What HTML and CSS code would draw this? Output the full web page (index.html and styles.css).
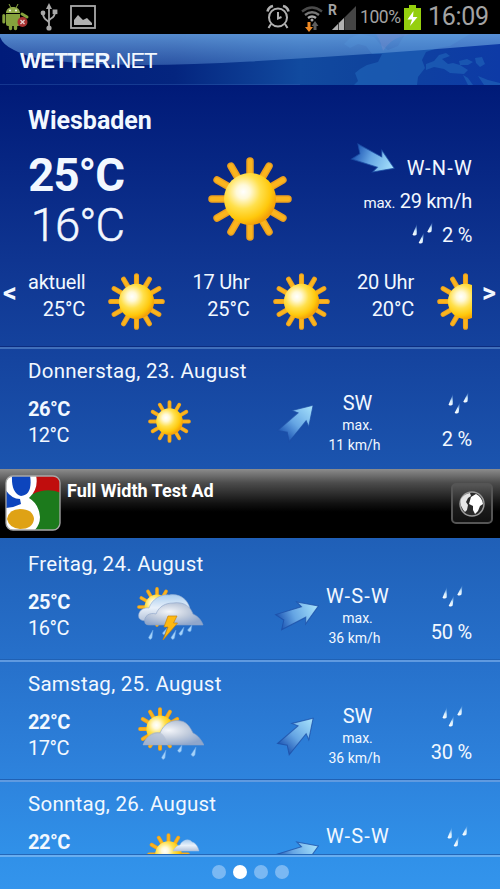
FILE: index.html
```html
<!DOCTYPE html>
<html lang="de">
<head>
  <meta charset="UTF-8" />
  <meta name="viewport" content="width=device-width, initial-scale=1" />
  <title>WETTER.NET</title>
  <link rel="stylesheet" href="styles.css">
</head>
<body>
  <!-- shared icons -->
  <svg class="defs" width="0" height="0">
    <defs>
      <radialGradient id="sunFill" cx="0.37" cy="0.36" r="0.66">
        <stop offset="0" stop-color="#ffffff" />
        <stop offset="0.2" stop-color="#fff9d8" />
        <stop offset="0.5" stop-color="#ffe04c" />
        <stop offset="0.8" stop-color="#ffc80c" />
        <stop offset="1" stop-color="#f3a008" />
      </radialGradient>
      <linearGradient id="arrowFill" x1="0" y1="0" x2="1" y2="0">
        <stop offset="0" stop-color="#1d56b4" />
        <stop offset="0.4" stop-color="#66a6e4" />
        <stop offset="1" stop-color="#a9e4fd" />
      </linearGradient>
      <linearGradient id="dropFill" x1="0.7" y1="0" x2="0.3" y2="1">
        <stop offset="0" stop-color="#7fb8f0" stop-opacity="0.2" />
        <stop offset="0.5" stop-color="#cfe9fb" />
        <stop offset="1" stop-color="#ffffff" />
      </linearGradient>
      <radialGradient id="cloudFill" cx="0.42" cy="0.4" r="0.65">
        <stop offset="0" stop-color="#f4f6fa" />
        <stop offset="0.5" stop-color="#c3cddd" />
        <stop offset="1" stop-color="#8fa6cb" />
      </radialGradient>
      <linearGradient id="cloudBack" x1="0" y1="0" x2="0" y2="1">
        <stop offset="0" stop-color="#a9cdf0" />
        <stop offset="0.5" stop-color="#e9f1fa" />
        <stop offset="1" stop-color="#b4c3da" />
      </linearGradient>
      <linearGradient id="glass" x1="0" y1="0" x2="0" y2="1">
        <stop offset="0" stop-color="#6aa5e2" stop-opacity="0.8" />
        <stop offset="1" stop-color="#5c8fd2" stop-opacity="0.45" />
      </linearGradient>
      <linearGradient id="headFill" x1="0" y1="0" x2="1" y2="0">
        <stop offset="0" stop-color="#001b7a" />
        <stop offset="0.35" stop-color="#04257f" />
        <stop offset="0.6" stop-color="#114a9f" />
        <stop offset="0.72" stop-color="#0f449d" />
        <stop offset="1" stop-color="#0d3aa6" />
      </linearGradient>
      <clipPath id="adClip"><rect x="1" y="1" width="54" height="54" rx="7" /></clipPath>
    </defs>

    <symbol id="sun" viewBox="-42 -42 84 84">
      <g class="rays">
        <path d="M0-38V-24M19-32.900L12-20.800M32.900-19L20.800-12M38 0H24M32.900 19L20.800 12M19 32.900L12 20.800M0 38V24M-19 32.900L-12 20.800M-32.900 19L-20.800 12M-38 0H-24M-32.900-19L-20.800-12M-19-32.900L-12-20.800" />
      </g>
      <g class="rays rays-inner">
        <path d="M0-38V-24M19-32.900L12-20.800M32.900-19L20.800-12M38 0H24M32.900 19L20.800 12M19 32.900L12 20.800M0 38V24M-19 32.900L-12 20.800M-32.900 19L-20.800 12M-38 0H-24M-32.900-19L-20.800-12M-19-32.900L-12-20.800" />
      </g>
      <circle r="26" fill="url(#sunFill)" />
    </symbol>

    <symbol id="arrow" viewBox="-25 -25 50 50">
      <path d="M22 0L4-11.500L6.500-5.500L-20-8L-14.500 0L-20 8L6.500 5.500L4 11.500Z" fill="url(#arrowFill)" stroke="#1c4ea6" stroke-width="1" stroke-opacity="0.75" />
    </symbol>

    <symbol id="drops" viewBox="0 0 24 26">
      <g fill="url(#dropFill)">
        <path d="M6 2L5.700 12.500Q4 14.500 1.500 12.700Z" />
        <path d="M21.500 0L20.500 9.500Q18.500 11.500 16.300 9.700Z" />
        <path d="M13 10.500L11.700 20.500Q9.800 22.500 7.700 20.700Z" />
      </g>
    </symbol>

    <symbol id="storm" viewBox="0 0 68 54">
      <use href="#sun" x="1" y="0" width="40" height="40" />
      <path d="M3 31C1 24 8 20 13 21C16 12 25 7 33 8C43 6 52 12 54 22L56 32L12 34C7 34 4 33 3 31Z" fill="url(#cloudBack)" stroke="#94acd0" stroke-width="0.600" />
      <path d="M9 36C7 29 14 25 20 27C23 19 30 16 37 16C49 14 55 21 57 27C62 29 66 34 67 38H14C11 38 9 37 9 36Z" fill="url(#cloudFill)" stroke="#8ba3c8" stroke-width="0.600" />
      <g fill="#a5d3fa" stroke="#5f9ee4" stroke-width="0.500">
        <path d="M17 43L16 51Q14 54 12.500 50.500Z" />
        <path d="M31 41L29 47Q27 49 26.500 46Z" />
        <path d="M40 43L38.500 51Q36.500 54 35 50.500Z" />
        <path d="M48 40L46.500 47Q44.500 50 43 46.500Z" />
        <path d="M56 38L55 44Q53 46 51.500 43Z" />
      </g>
      <path d="M32 29H41L37.500 36H41.500L27 53L32 40H28Z" fill="#fdb813" stroke="#c98408" stroke-width="0.700" />
    </symbol>

    <symbol id="shower" viewBox="0 0 68 54">
      <use href="#sun" x="2" y="0" width="44" height="44" />
      <path d="M7 38C9 31 16 25 24 26C28 16 37 12 45 14C51 15 54 20 57 26C62 28 66 34 68 38Z" fill="url(#cloudFill)" stroke="#8ba3c8" stroke-width="0.600" />
      <path d="M7 38C9 31 15 25 21 25C27 25 30 31 32 38Z" fill="#aebbd0" opacity="0.6" />
      <g fill="#a5d3fa" stroke="#5f9ee4" stroke-width="0.500">
        <path d="M30 43L29 51Q27 54 25.500 50.500Z" />
        <path d="M46 38L45.500 44Q43 47 41.500 43.500Z" />
        <path d="M60 40L59 48Q57 51 55 47.500Z" />
      </g>
    </symbol>

    <symbol id="fair" viewBox="0 0 54 44">
      <use href="#sun" x="0" y="0" width="43" height="43" />
      <path d="M26 18C28 14 31 12 33 12C35 7 42 5 45 9C49 10 51 14 52 18Z" fill="url(#cloudBack)" stroke="#a9c0e0" stroke-width="0.500" />
    </symbol>
  </svg>

  <div class="phone">
    <div class="statusbar">
      <svg class="st-droid" width="30" height="30" viewBox="0 0 30 30">
        <path d="M9 2L11 6M18 2L16 6" stroke="#8ea842" stroke-width="1" />
        <path d="M6 11C6 3 20 3 20 11Z" fill="#93ad4a" />
        <circle cx="10" cy="8.500" r="0.900" fill="#fff" /><circle cx="16" cy="8.500" r="0.900" fill="#fff" />
        <path d="M6 12H20V22Q20 24 18 24H8Q6 24 6 22Z" fill="#86a23d" />
        <path d="M10.500 22V26.500M15.500 22V26.500" stroke="#86a23d" stroke-width="3.400" stroke-linecap="round" />
        <path d="M3.800 13.500V20M22 12L27 15" stroke="#86a23d" stroke-width="3" stroke-linecap="round" />
        <circle cx="22.500" cy="20" r="5" fill="#a83232" />
        <path d="M20.500 18L24.500 22M24.500 18L20.500 22" stroke="#e8d0d0" stroke-width="1.300" />
      </svg>
      <svg class="st-usb" width="18" height="28" viewBox="0 0 18 28">
        <g fill="none" stroke="#a9a9a9" stroke-width="1.800">
          <path d="M9 25V4M9 20C9 17 3 18 3 10M9 18C9 15 15 16 15 9" />
        </g>
        <path d="M9 0L12 6H6Z" fill="#a9a9a9" />
        <circle cx="9" cy="25" r="2.600" fill="#a9a9a9" />
        <circle cx="3" cy="10" r="2.400" fill="#a9a9a9" />
        <rect x="12.600" y="6.500" width="4.800" height="4.600" fill="#a9a9a9" />
      </svg>
      <svg class="st-pic" width="26" height="24" viewBox="0 0 26 24">
        <rect x="1" y="1" width="24" height="22" fill="none" stroke="#a9a9a9" stroke-width="1.800" />
        <path d="M4 20V15L8 10L13 15L17 13L22 18V20Z" fill="#b0b0b0" />
      </svg>
      <div class="st-right">
        <svg width="24" height="26" viewBox="0 0 24 26">
          <g fill="none" stroke="#b0b0b0" stroke-width="2">
            <circle cx="12" cy="13.500" r="9" />
            <path d="M12 8V14.500L15.500 13M5 20L2.500 24M19 20L21.500 24" />
            <path d="M1.500 7.500Q2.500 3 7 2M22.500 7.500Q21.500 3 17 2" stroke-width="2.600" />
          </g>
        </svg>
        <svg class="st-wifi" width="22" height="26" viewBox="0 0 22 26">
          <g fill="none" stroke-width="2.400">
            <path d="M1 5.500Q11-2.500 21 5.500" stroke="#4a4a4a" />
            <path d="M4 9Q11 3.500 18 9" stroke="#777" />
            <path d="M7 12Q11 9 15 12" stroke="#aaa" />
          </g>
          <circle cx="11" cy="14" r="1.500" fill="#aaa" />
          <path d="M6.500 16H9.500V21H12L8 26L4 21H6.500Z" fill="#f08a24" />
          <path d="M12.500 24V20H10.500L14 15L17.500 20H15.500V24Z" fill="#5e5e5e" />
        </svg>
        <div class="st-signal">
          <span class="roam">R</span>
          <svg width="24" height="24" viewBox="0 0 24 24">
            <path d="M24 0V24H0Z" fill="#454545" />
            <path d="M12 12V24H0Z" fill="#b0b0b0" />
            <path d="M6.500 16V24M12.500 11V24" stroke="#222" stroke-width="0.800" />
          </svg>
        </div>
        <span class="percent">100%</span>
        <svg class="st-batt" width="17" height="25" viewBox="0 0 17 25">
          <path d="M5 0H12V3H17V25H0V3H5Z" fill="#95cf0e" />
          <path d="M9.500 6L3.500 14.500H8L6 21L13.500 12H9Z" fill="#fff" />
        </svg>
        <span class="clock">16:09</span>
      </div>
    </div>

    <div class="header">
      <svg class="header-bg" width="500" height="51" viewBox="0 0 500 51">
        <rect width="500" height="51" fill="url(#headFill)" />
        <!-- oceans -->
        <g fill="#2167bb" opacity="0.6">
          <path d="M344 10L350 14L358 10L366 12L372 20L382 20L378 28L367 31L360 35L355 39L358 47L354 51H417L418 43L425 34L422 26L426 18L438 14L450 12L470 0H405L398 12L388 16L380 10L374 3L360 0L350 4Z" />
          <path d="M426 30L434 27L439 21L446 19L450 22L442 25L448 30L453 29L460 31L468 36L464 40L450 39L444 35L434 33L426 36Z" />
          <path d="M459 27L467 25L473 28L468 31H460Z" />
          <path d="M475 24L482 23L485 30L480 33L476 29Z" />
          <path d="M463 41L468 44L473 51H468Z" />
          <path d="M478 42L488 46L500 49V51H484Z" />
        </g>
        <path d="M0 0H500V10Q380 20 250 27.500T50 26Q28 24 14 16Q3 11 0 3Z" fill="url(#glass)" />
        <path d="M383 17Q390 6 400 3L412 0H376L380 7Z" fill="#7f8fcf" opacity="0.35" />
        <path d="M0 50.500H300" stroke="#3160b2" stroke-opacity="0.400" />
      </svg>
      <div class="logo"><b>WETTER.</b><span>NET</span></div>
    </div>

    <div class="content">
      <div class="today">
        <div class="city">Wiesbaden</div>
        <div class="now">
          <div class="now-temp">
            <div class="max">25°C</div>
            <div class="min">16°C</div>
          </div>
          <svg class="now-sun"><use href="#sun" /></svg>
          <div class="now-info">
            <div class="line"><svg class="arrow wnw"><use href="#arrow" /></svg><span class="compass">W-N-W</span></div>
            <div class="line"><small>max.</small> 29 km/h</div>
            <div class="line"><svg class="drops"><use href="#drops" /></svg>2 %</div>
          </div>
        </div>
        <div class="hours-row">
          <span class="nav">&lt;</span>
          <div class="hours">
            <div class="hour"><p>aktuell<br>25°C</p><svg><use href="#sun" /></svg></div>
            <div class="hour"><p>17 Uhr<br>25°C</p><svg><use href="#sun" /></svg></div>
            <div class="hour"><p>20 Uhr<br>20°C</p><svg><use href="#sun" /></svg></div>
          </div>
          <span class="nav next">&gt;</span>
        </div>
      </div>

      <div class="day first">
        <h3>Donnerstag, 23. August</h3>
        <div class="day-body">
          <div class="temps"><b>26°C</b><span>12°C</span></div>
          <div class="icon"><svg class="i-sun"><use href="#sun" /></svg></div>
          <div class="dir"><svg class="arrow sw"><use href="#arrow" /></svg></div>
          <div class="wind"><span>SW</span><small>max.</small><small class="speed">11 km/h</small></div>
          <div class="rain"><svg class="drops"><use href="#drops" /></svg><span>2 %</span></div>
        </div>
      </div>

      <div class="ad">
        <svg class="ad-logo" width="56" height="56" viewBox="0 0 56 56">
          <g clip-path="url(#adClip)">
            <rect width="56" height="56" fill="#1c7a1c" />
            <path d="M28 0H56V18Q42 12 28 19Z" fill="#c00d0d" />
            <path d="M0 0H31Q34 14 24 23Q34 29 35 42Q35 50 29 56H0Z" fill="#fff" />
            <path d="M7 0H25Q28 20 16 21Q6 18 7 0Z" fill="#0d45bd" />
            <path d="M0 14Q6 24 15 24L16 29Q8 33 0 33Z" fill="#0d45bd" />
            <path d="M2 44Q4 34 15 34Q28 34 29 44Q28 54 15 54Q4 53 2 44Z" fill="#dfa215" />
          </g>
          <rect x="1" y="1" width="54" height="54" rx="7" fill="none" stroke="#a8a8a8" stroke-width="1.300" />
        </svg>
        <span class="ad-text">Full Width Test Ad</span>
        <div class="ad-btn">
          <svg width="28" height="28" viewBox="0 0 28 28">
            <circle cx="14" cy="14" r="12" fill="#2a2a2a" stroke="#9a9a9a" stroke-width="1.500" />
            <path d="M3 9Q6 4 12 3L13 6L10 8L8 12L10 15L9 20L7 22Q1 16 3 9Z" fill="#e6e6e6" />
            <path d="M13 7L18 4Q24 7 25 14L22 16L20 21L17 24L15 20L15 16L11 14Z" fill="#fff" />
          </svg>
        </div>
      </div>

      <div class="day after-ad">
        <h3>Freitag, 24. August</h3>
        <div class="day-body">
          <div class="temps"><b>25°C</b><span>16°C</span></div>
          <div class="icon"><svg class="i-cloud"><use href="#storm" /></svg></div>
          <div class="dir"><svg class="arrow wsw"><use href="#arrow" /></svg></div>
          <div class="wind"><span class="compass">W-S-W</span><small>max.</small><small class="speed">36 km/h</small></div>
          <div class="rain"><svg class="drops"><use href="#drops" /></svg><span>50 %</span></div>
        </div>
      </div>

      <div class="day">
        <h3>Samstag, 25. August</h3>
        <div class="day-body">
          <div class="temps"><b>22°C</b><span>17°C</span></div>
          <div class="icon"><svg class="i-cloud"><use href="#shower" /></svg></div>
          <div class="dir"><svg class="arrow sw"><use href="#arrow" /></svg></div>
          <div class="wind"><span>SW</span><small>max.</small><small class="speed">36 km/h</small></div>
          <div class="rain"><svg class="drops"><use href="#drops" /></svg><span>30 %</span></div>
        </div>
      </div>

      <div class="day last">
        <h3>Sonntag, 26. August</h3>
        <div class="day-body">
          <div class="temps"><b>22°C</b></div>
          <div class="icon"><svg class="i-fair"><use href="#fair" /></svg></div>
          <div class="dir"><svg class="arrow wsw"><use href="#arrow" /></svg></div>
          <div class="wind"><span class="compass">W-S-W</span></div>
          <div class="rain"><svg class="drops"><use href="#drops" /></svg></div>
        </div>
      </div>
    </div>

    <div class="pager">
      <i></i><i class="active"></i><i></i><i></i>
    </div>
  </div>
</body>
</html>
```
FILE: styles.css
```css
* {
  box-sizing: border-box;
}

body {
  margin: 0;
  background: #000;
  color: #f2f8ff;
  font-family: Roboto, "Liberation Sans", sans-serif;
  font-size: 20px;
  overflow: hidden;
}

svg {
  display: block;
  flex: none;
}

.defs {
  position: absolute;
}

.rays {
  fill: none;
  stroke: #eda01e;
  stroke-width: 7.500;
  stroke-linecap: round;
}

.rays-inner {
  stroke: #fab51e;
  stroke-width: 4.500;
}

.phone {
  width: 500px;
  height: 889px;
  display: flex;
  flex-direction: column;
  background: linear-gradient(#001a78 85px, #0f3591 260px, #1b54ae 465px, #2061b9 550px, #266fc9 650px, #2d81db 765px, #3090e8 850px, #3394ec 889px);
}

/* status bar */
.statusbar {
  height: 34px;
  flex: none;
  display: flex;
  align-items: center;
  background: #000;
  color: #a3a3a3;
}

.st-usb {
  margin-left: 10px;
}

.st-pic {
  margin-left: 12px;
}

.st-right {
  margin-left: auto;
  padding-right: 11px;
  display: flex;
  align-items: center;
}

.st-wifi {
  margin-left: 11px;
  margin-top: 3px;
}

.st-signal {
  position: relative;
  margin-left: 9px;
  margin-top: 2px;
}

.roam {
  position: absolute;
  left: -4px;
  top: -3px;
  font-size: 14px;
  line-height: 14px;
  font-weight: bold;
}

.percent {
  font-size: 17.500px;
  margin-left: 4px;
  width: 41px;
  letter-spacing: -0.400px;
}

.st-batt {
  margin-left: 3px;
}

.clock {
  font-size: 25px;
  line-height: 34px;
  margin-left: 7px;
  width: 61px;
  letter-spacing: -0.300px;
}

/* header */
.header {
  position: relative;
  height: 51px;
  flex: none;
}

.header-bg {
  position: absolute;
  left: 0;
  top: 0;
}

.logo {
  position: relative;
  padding: 14px 0 0 20px;
  font-family: "Liberation Sans", Arial, sans-serif;
  font-size: 22px;
  line-height: 26px;
  letter-spacing: -0.500px;
}

.logo span {
  letter-spacing: -1px;
}

/* today */
.content {
  flex: 1;
  min-height: 0;
  overflow: hidden;
}

.today {
  height: 262px;
  padding-top: 21px;
  border-bottom: 1px solid #0c2c80;
}

.city {
  padding-left: 28px;
  font-size: 25px;
  line-height: 30px;
  font-weight: bold;
}

.now {
  display: grid;
  grid-template-columns: 180px 84px 1fr;
  height: 100px;
  margin-top: 15px;
  padding: 0 28px;
}

.now-temp {
  width: 96px;
  font-size: 45.500px;
  line-height: 49.500px;
  letter-spacing: -1px;
  text-align: right;
}

.max {
  font-weight: bold;
}

.min {
  font-weight: 300;
  -webkit-text-stroke: 0.500px #f2f8ff;
}

.now-sun {
  width: 84px;
  height: 84px;
  margin-top: 6px;
}

.line {
  display: flex;
  align-items: center;
  justify-content: flex-end;
  height: 33.500px;
  letter-spacing: -0.300px;
  white-space: pre;
}

.line small {
  margin-top: 3px;
}

small {
  font-size: 15px;
}

.compass,
.line .compass {
  letter-spacing: 1.200px;
  margin-right: -1px;
}

.arrow {
  width: 51px;
  height: 51px;
}

.arrow.wnw {
  transform: rotate(23deg);
  margin: -16px 8px 0 0;
}

.arrow.wsw {
  transform: rotate(-22deg);
}

.arrow.sw {
  transform: rotate(-46deg);
}

.drops {
  width: 24px;
  height: 26px;
}

.line .drops {
  margin-right: 7px;
}

.hours-row {
  display: flex;
  height: 76px;
  margin-top: 18px;
}

.nav {
  width: 28px;
  padding-left: 3px;
  font-size: 27px;
  line-height: 49px;
  font-weight: bold;
}

.nav.next {
  padding-left: 10px;
}

.hours {
  width: 444px;
  display: flex;
  overflow: hidden;
}

.hour {
  display: flex;
  flex: none;
  width: 164.500px;
}

.hour p {
  margin: 0 23px 0 0;
  width: 57px;
  line-height: 26.500px;
  text-align: right;
  letter-spacing: -0.200px;
  white-space: nowrap;
}

.hour svg {
  width: 57px;
  height: 57px;
  margin-top: 4px;
}

/* day list */
.day {
  height: 120px;
  padding: 10px 28px 0;
  border-top: 2px solid #5f9ae0;
  border-bottom: 1px solid #2061b4;
}

.day.first {
  height: 122px;
  border-top-color: #416fba;
  border-bottom: 0;
}

.day.after-ad {
  height: 122px;
  padding-top: 14px;
  border-top: 0;
}

.day h3 {
  margin: 0;
  font-size: 20.500px;
  font-weight: normal;
  line-height: 24px;
  letter-spacing: 0.270px;
}

.day-body {
  display: grid;
  grid-template-columns: 72px 140px 83px 75px 74px;
  height: 76px;
}

.temps,
.wind {
  display: flex;
  flex-direction: column;
}

.temps {
  padding-top: 13px;
  line-height: 26px;
  letter-spacing: -0.500px;
}

.icon {
  display: flex;
  align-items: center;
  justify-content: center;
}

.i-sun {
  width: 43px;
  height: 43px;
  margin-right: 1px;
}

.i-cloud {
  width: 68px;
  height: 54px;
}

.i-fair {
  width: 54px;
  height: 44px;
  margin-left: 7px;
  margin-top: 2px;
}

.dir {
  display: flex;
  align-items: center;
  justify-content: flex-end;
}

.wind {
  align-items: center;
  margin-left: -6px;
  padding-top: 8px;
  line-height: 24px;
}

.wind small {
  font-size: 14px;
  line-height: 20px;
}

.wind .speed {
  margin-right: 6px;
}

.rain {
  justify-self: end;
  display: flex;
  flex-direction: column;
  align-items: center;
  padding-top: 9px;
  line-height: 26px;
  letter-spacing: -0.200px;
}

.rain .drops {
  margin-left: 4px;
}

.last .rain .drops {
  margin-right: 2px;
}

.rain span {
  margin-top: 8px;
}

/* ad */
.ad {
  height: 69px;
  display: flex;
  padding: 6px 7px 0 5px;
  background: linear-gradient(#8c8c8c, #4c4c4c 20%, #111 50%, #000 62%);
}

.ad-text {
  margin-left: 6px;
  padding-top: 5px;
  font-size: 18px;
  line-height: 22px;
  font-weight: bold;
  color: #fff;
}

.ad-btn {
  width: 42px;
  height: 41px;
  margin: 8px 0 0 auto;
  border: 2px solid #555;
  border-radius: 5px;
  background: linear-gradient(#555, #1c1c1c 60%, #111);
  display: flex;
  align-items: center;
  justify-content: center;
}

/* page dots */
.pager {
  position: relative;
  height: 34px;
  flex: none;
  display: flex;
  justify-content: center;
  gap: 7px;
  padding-top: 8px;
  border-top: 2px solid #69aef0;
  box-shadow: 0 -1px 0 #2467b8;
}

.pager i {
  width: 14px;
  height: 14px;
  border-radius: 50%;
  background: #7ab8f3;
}

.pager .active {
  background: #fff;
}
```
